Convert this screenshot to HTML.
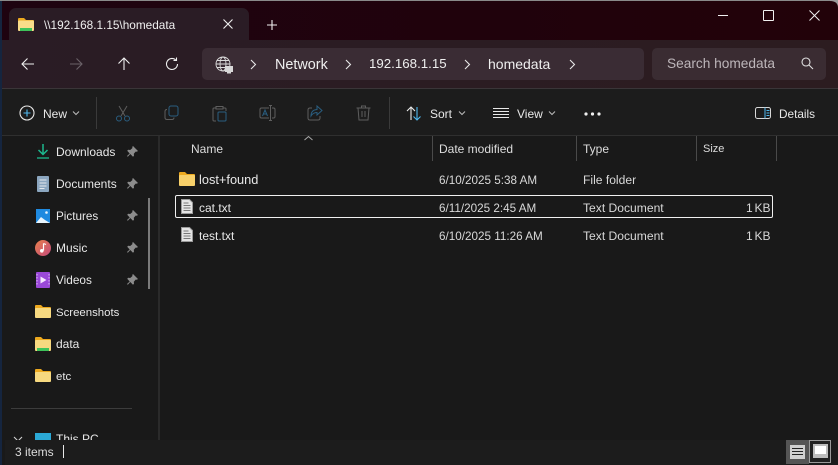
<!DOCTYPE html>
<html><head><meta charset="utf-8">
<style>
html,body{margin:0;padding:0;background:#191919;}
#w{position:relative;width:838px;height:465px;overflow:hidden;background:#191919;font-family:"Liberation Sans",sans-serif;color:#e8e8e8;font-size:12px;}
.t{position:absolute;white-space:nowrap;line-height:16px;}
.b{position:absolute;}
svg{position:absolute;overflow:visible;}
.d{font-size:11.7px;color:#d8d8d8;}
.k{font-size:12.1px;color:#d8d8d8;}
.s{font-size:12px;color:#d8d8d8;word-spacing:-1.5px;left:746px;}
</style></head><body><div id="w">
<div class="b" style="left:0;top:0;width:838px;height:40px;background:linear-gradient(90deg,#1e0310,#220209);"></div>
<div class="b" style="left:0;top:0;width:838px;height:1px;background:#8a8a8a;"></div>
<div class="b" style="left:0;top:1px;width:2px;height:464px;background:#15253f;"></div>
<div class="b" style="left:2px;top:40px;width:836px;height:48px;background:linear-gradient(90deg,#2a1c25,#2c1c20);"></div>
<div class="b" style="left:9px;top:8px;width:240px;height:32px;background:#2a1c25;border-radius:7px 7px 0 0;"></div>
<div class="b" style="left:2px;top:88px;width:836px;height:1px;background:#3a3538;"></div>
<div class="b" style="left:2px;top:89px;width:836px;height:47px;background:#1c1c1c;"></div>
<div class="b" style="left:2px;top:135px;width:836px;height:1px;background:#2f2f2f;"></div>
<svg style="left:830px;top:0" width="8" height="8"><path d="M0 0h8v8q0-7-8-7z" fill="#9a9a9a"/></svg>

<!-- tab -->
<svg style="left:18px;top:17px" width="16" height="15"><path d="M0 2q0-1 1-1h5l2 2h7q1 0 1 1v2H0z" fill="#eda91f"/><rect y="3.500" width="16" height="10.500" rx="1" fill="#f9dd8a"/><rect x="2" y="11" width="12" height="3" fill="#3ec35a"/></svg>
<div class="t" style="left:44px;top:17px;color:#f0f0f0;font-size:11.800px;">\\192.168.1.15\homedata</div>
<svg style="left:222px;top:18px" width="12" height="12" fill="none" stroke="#f0f0f0" stroke-width="1.100"><path d="M1.500 1.500l9 9M10.500 1.500l-9 9"/></svg>
<svg style="left:266px;top:19px" width="12" height="12" fill="none" stroke="#f0f0f0" stroke-width="1.100"><path d="M6 1v10M1 6h10"/></svg>

<!-- window controls -->
<div class="b" style="left:718px;top:15px;width:10px;height:1px;background:#f0f0f0;"></div>
<div class="b" style="left:763px;top:10px;width:9px;height:9px;border:1px solid #f0f0f0;border-radius:1px;"></div>
<svg style="left:809px;top:10px" width="11" height="11" fill="none" stroke="#f0f0f0" stroke-width="1"><path d="M.5.500l10 10M10.500.5l-10 10"/></svg>

<!-- nav -->
<svg style="left:21px;top:57px" width="14" height="14" fill="none" stroke="#efefef" stroke-width="1.100"><path d="M13 7H1M6.500 1.500L1 7l5.500 5.500"/></svg>
<svg style="left:69px;top:57px" width="14" height="14" fill="none" stroke="#6b6268" stroke-width="1.100"><path d="M1 7h12M7.500 1.500L13 7l-5.500 5.500"/></svg>
<svg style="left:117px;top:57px" width="14" height="14" fill="none" stroke="#efefef" stroke-width="1.100"><path d="M7 13V1M1.500 6.500L7 1l5.500 5.500"/></svg>
<svg style="left:165px;top:57px" width="14" height="14" fill="none" stroke="#efefef" stroke-width="1.100"><path d="M12.500 7a5.500 5.500 0 1 1-1.800-4.100M11.500 .5v3h-3"/></svg>

<div class="b" style="left:202px;top:48px;width:442px;height:32px;background:#3a2c34;border-radius:5px;"></div>
<div class="b" style="left:652px;top:48px;width:174px;height:32px;background:#3a2c32;border-radius:5px;"></div>
<svg style="left:215px;top:56px" width="18" height="18" fill="none" stroke="#dcdcdc" stroke-width=".9"><circle cx="8" cy="8" r="7"/><ellipse cx="8" cy="8" rx="3" ry="7"/><path d="M1 8h14M2 4.500h12M2 11.500h12"/><rect x="10" y="10" width="8" height="6" fill="#d8d8d8" stroke="none"/><rect x="12" y="16" width="4" height="1.500" fill="#d8d8d8" stroke="none"/></svg>
<svg style="left:250px;top:59px" width="7" height="11" fill="none" stroke="#e8e8e8" stroke-width="1.100"><path d="M1 1l4.500 4.500L1 10"/></svg>
<div class="t" style="left:275px;top:57px;font-size:14.400px;color:#efefef;">Network</div>
<svg style="left:345px;top:59px" width="7" height="11" fill="none" stroke="#e8e8e8" stroke-width="1.100"><path d="M1 1l4.500 4.500L1 10"/></svg>
<div class="t" style="left:369px;top:56px;font-size:13.300px;color:#efefef;">192.168.1.15</div>
<svg style="left:464px;top:59px" width="7" height="11" fill="none" stroke="#e8e8e8" stroke-width="1.100"><path d="M1 1l4.500 4.500L1 10"/></svg>
<div class="t" style="left:488px;top:56px;font-size:14px;color:#efefef;">homedata</div>
<svg style="left:569px;top:59px" width="7" height="11" fill="none" stroke="#e8e8e8" stroke-width="1.100"><path d="M1 1l4.500 4.500L1 10"/></svg>
<div class="t" style="left:667px;top:56px;font-size:13.700px;color:#bdb6ba;">Search homedata</div>
<svg style="left:801px;top:57px" width="13" height="13" fill="none" stroke="#e0e0e0" stroke-width="1.100"><circle cx="5" cy="5" r="4"/><path d="M8 8l4 4"/></svg>

<!-- toolbar -->
<svg style="left:19px;top:105px" width="16" height="16" fill="none" stroke-width="1.100"><circle cx="8" cy="8" r="7" stroke="#e8e8e8"/><path d="M8 4.500v7M4.500 8h7" stroke="#4fb8ee"/></svg>
<div class="t" style="left:43px;top:106px;">New</div>
<svg style="left:72px;top:111px" width="8" height="5" fill="none" stroke="#bcbcbc"><path d="M1 .5l3 3 3-3"/></svg>
<div class="b" style="left:96px;top:97px;width:1px;height:32px;background:#3a3a3a;"></div>
<svg style="left:115px;top:105px" width="16" height="17" fill="none" stroke-width="1"><path d="M4 1l6 10M12 1L6 11" stroke="#5e5e5e"/><circle cx="4" cy="13.500" r="2.500" stroke="#2a5e80"/><circle cx="12" cy="13.500" r="2.500" stroke="#2a5e80"/></svg>
<svg style="left:164px;top:105px" width="15" height="16" fill="none" stroke-width="1"><rect x="5" y="1" width="9" height="10" rx="2" stroke="#2a5e80"/><path d="M3 4.500q-2 0-2 2v6q0 2 2 2h5q2 0 2-2" stroke="#5e5e5e"/></svg>
<svg style="left:212px;top:105px" width="15" height="17" fill="none" stroke-width="1"><path d="M4 3H2q-1 0-1 1v11q0 1 1 1h2M11 3h2q1 0 1 1v2M4 1.500h7V4H4z" stroke="#5e5e5e"/><rect x="6" y="7" width="8" height="9" rx="1" stroke="#2a5e80"/></svg>
<svg style="left:259px;top:105px" width="17" height="16" fill="none" stroke-width="1"><path d="M10 3H2.500Q1 3 1 4.500v7Q1 13 2.500 13H10M13 3h1.500Q16 3 16 4.500v7q0 1.500-1.500 1.500H13" stroke="#5e5e5e"/><path d="M11.500 .5v15M10 .5h3M10 15.500h3" stroke="#5e5e5e"/><path d="M3.500 11l2.500-6 2.500 6M4.500 9h3" stroke="#2a5e80"/></svg>
<svg style="left:307px;top:105px" width="16" height="16" fill="none" stroke-width="1"><path d="M5 3H3Q1 3 1 5v8q0 2 2 2h8q2 0 2-2v-2" stroke="#5e5e5e"/><path d="M10 1l5 4.500-5 4.500V7.500Q6 7.500 4 11q0-6 6-6.500z" stroke="#2a5e80"/></svg>
<svg style="left:356px;top:105px" width="15" height="16" fill="none" stroke="#5e5e5e" stroke-width="1"><path d="M.5 3h14M5.500 3V1h4v2M2 3l1 12h9l1-12M6 6v6M9 6v6"/></svg>
<div class="b" style="left:389px;top:97px;width:1px;height:32px;background:#3a3a3a;"></div>
<svg style="left:406px;top:106px" width="16" height="15" fill="none" stroke-width="1.100"><path d="M5 14V1M1 5l4-4 4 4" stroke="#ececec"/><path d="M11 1v13M7.500 10.500l3.500 3.500 3.500-3.500" stroke="#4fb8ee"/></svg>
<div class="t" style="left:430px;top:106px;">Sort</div>
<svg style="left:458px;top:111px" width="8" height="5" fill="none" stroke="#bcbcbc"><path d="M1 .5l3 3 3-3"/></svg>
<svg style="left:493px;top:108px" width="16" height="10" fill="none" stroke="#e8e8e8"><path d="M0 .5h16M0 3.500h16M0 6.500h16M0 9.500h16"/></svg>
<div class="t" style="left:517px;top:106px;">View</div>
<svg style="left:548px;top:111px" width="8" height="5" fill="none" stroke="#bcbcbc"><path d="M1 .5l3 3 3-3"/></svg>
<svg style="left:584px;top:112px" width="17" height="4" fill="#f0f0f0"><circle cx="2" cy="2" r="1.600"/><circle cx="8.500" cy="2" r="1.600"/><circle cx="15" cy="2" r="1.600"/></svg>
<svg style="left:755px;top:107px" width="16" height="12" fill="none" stroke-width="1"><rect x=".5" y=".5" width="15" height="11" rx="2" stroke="#d8d8d8"/><path d="M10 .5v11" stroke="#4fb8ee"/><path d="M11.500 3.500h3M11.500 6h3M11.500 8.500h3" stroke="#4fb8ee"/></svg>
<div class="t" style="left:779px;top:106px;font-size:11.800px;">Details</div>

<!-- sidebar -->
<svg style="left:36px;top:144px" width="14" height="16" fill="none" stroke="#1cb78e" stroke-width="1.500"><path d="M7 0v10M2.500 6L7 10.500 11.500 6"/><path d="M1 14h12" stroke-width="1.300"/></svg>
<div class="t" style="left:56px;top:144px;">Downloads</div>
<svg style="left:36px;top:176px" width="14" height="16"><rect x="1" width="12" height="16" rx="1" fill="#8ba6bf"/><path d="M3.500 4h7M3.500 7h7M3.500 10h7M3.500 12.500h5" stroke="#e4e8ec" stroke-width="1"/></svg>
<div class="t" style="left:56px;top:176px;">Documents</div>
<svg style="left:36px;top:209px" width="14" height="14"><rect width="14" height="14" fill="#1f8ae0"/><path d="M0 14l5-6 4 3 5 3z" fill="#e9f4fc"/><circle cx="10.500" cy="3.500" r="1.300" fill="#e9f4fc"/></svg>
<div class="t" style="left:56px;top:209px;font-size:11.700px;">Pictures</div>
<svg style="left:35px;top:240px" width="16" height="16"><defs><linearGradient id="m" x1="0" y1="0" x2="1" y2="1"><stop offset="0" stop-color="#e8804c"/><stop offset="1" stop-color="#c44a7c"/></linearGradient></defs><circle cx="8" cy="8" r="8" fill="url(#m)"/><path d="M8.500 3.500v7" stroke="#fff" stroke-width="1.200"/><circle cx="6.800" cy="10.800" r="1.800" fill="#fff"/><path d="M8.500 3.500l2.500 1" stroke="#fff" stroke-width="1.200"/></svg>
<div class="t" style="left:56px;top:240px;">Music</div>
<svg style="left:36px;top:272px" width="14" height="16"><rect width="14" height="16" rx="1" fill="#9a48d8"/><path d="M4.500 4.500l6 3.500-6 3.500z" fill="#f5e6ff"/><path d="M1 2v12M13 2v12" stroke="#d0a6f0" stroke-width="1.200" stroke-dasharray="1.500 1.500"/></svg>
<div class="t" style="left:56px;top:272px;font-size:11.800px;">Videos</div>
<svg style="left:127px;top:146px" width="11" height="11" fill="#8c8c8c"><path d="M6 0l5 5-1.200.8-1-.3-2 2.200.2 2-1 1L3.300 8 .8 10.700 0 10l2.700-2.500L.2 4.800l1-1 2 .2L5.500 2l-.3-1z"/></svg>
<svg style="left:127px;top:178px" width="11" height="11" fill="#8c8c8c"><path d="M6 0l5 5-1.200.8-1-.3-2 2.200.2 2-1 1L3.300 8 .8 10.700 0 10l2.700-2.500L.2 4.800l1-1 2 .2L5.500 2l-.3-1z"/></svg>
<svg style="left:127px;top:210px" width="11" height="11" fill="#8c8c8c"><path d="M6 0l5 5-1.200.8-1-.3-2 2.200.2 2-1 1L3.300 8 .8 10.700 0 10l2.700-2.500L.2 4.800l1-1 2 .2L5.500 2l-.3-1z"/></svg>
<svg style="left:127px;top:242px" width="11" height="11" fill="#8c8c8c"><path d="M6 0l5 5-1.200.8-1-.3-2 2.200.2 2-1 1L3.300 8 .8 10.700 0 10l2.700-2.500L.2 4.800l1-1 2 .2L5.500 2l-.3-1z"/></svg>
<svg style="left:127px;top:274px" width="11" height="11" fill="#8c8c8c"><path d="M6 0l5 5-1.200.8-1-.3-2 2.200.2 2-1 1L3.300 8 .8 10.700 0 10l2.700-2.500L.2 4.800l1-1 2 .2L5.500 2l-.3-1z"/></svg>
<div class="b" style="left:148px;top:198px;width:2px;height:91px;background:#7a7a7a;"></div>

<svg style="left:35px;top:305px" width="16" height="13"><path d="M0 1q0-1 1-1h5l2 2h7q1 0 1 1v2H0z" fill="#eda91f"/><rect y="3" width="16" height="10" rx="1" fill="#f7d980"/></svg>
<div class="t" style="left:56px;top:305px;font-size:11.400px;">Screenshots</div>
<svg style="left:35px;top:337px" width="16" height="15"><path d="M0 1q0-1 1-1h5l2 2h7q1 0 1 1v2H0z" fill="#eda91f"/><rect y="3" width="16" height="11" rx="1" fill="#f7d980"/><rect x="2" y="11" width="12" height="3" fill="#3ec35a"/></svg>
<div class="t" style="left:56px;top:336px;">data</div>
<svg style="left:35px;top:369px" width="16" height="13"><path d="M0 1q0-1 1-1h5l2 2h7q1 0 1 1v2H0z" fill="#eda91f"/><rect y="3" width="16" height="10" rx="1" fill="#f7d980"/></svg>
<div class="t" style="left:56px;top:369px;font-size:11.400px;">etc</div>
<div class="b" style="left:11px;top:408px;width:121px;height:1px;background:#3c3c3c;"></div>
<svg style="left:13px;top:436px" width="10" height="6" fill="none" stroke="#d0d0d0" stroke-width="1.100"><path d="M1 1l4 4 4-4"/></svg>
<div class="b" style="left:35px;top:433px;width:16px;height:12px;background:#2ba9d6;"></div>
<div class="t" style="left:56px;top:431px;">This PC</div>
<div class="b" style="left:158px;top:136px;width:2px;height:304px;background:#2a2a2a;"></div>

<!-- headers -->
<svg style="left:304px;top:136px" width="9" height="5" fill="none" stroke="#a8a8a8"><path d="M.5 4l4-3.500L8.500 4"/></svg>
<div class="t" style="left:191px;top:141px;color:#dcdcdc;">Name</div>
<div class="t" style="left:439px;top:141px;color:#dcdcdc;">Date modified</div>
<div class="t" style="left:583px;top:141px;color:#dcdcdc;">Type</div>
<div class="t" style="left:703px;top:141px;color:#dcdcdc;font-size:11px;">Size</div>
<div class="b" style="left:432px;top:136px;width:1px;height:25px;background:#4a4a4a;"></div>
<div class="b" style="left:576px;top:136px;width:1px;height:25px;background:#4a4a4a;"></div>
<div class="b" style="left:696px;top:136px;width:1px;height:25px;background:#4a4a4a;"></div>
<div class="b" style="left:776px;top:136px;width:1px;height:25px;background:#4a4a4a;"></div>

<!-- rows -->
<svg style="left:179px;top:172px" width="16" height="14"><path d="M0 1q0-1 1-1h5l2 2h7q1 0 1 1v2H0z" fill="#eda91f"/><rect y="3" width="16" height="11" rx="1" fill="#f7d06a"/></svg>
<div class="t" style="left:199px;top:172px;font-size:12.800px;">lost+found</div>
<div class="t d" style="left:439px;top:173px;">6/10/2025 5:38 AM</div>
<div class="t k" style="left:583px;top:172px;">File folder</div>

<div class="b" style="left:175px;top:195px;width:596px;height:21px;border:1px solid #f0f0f0;border-radius:2px;"></div>
<svg style="left:181px;top:199px" width="12" height="15"><path d="M.5.500h8l3 3v11H.5z" fill="#e4e4e4" stroke="#9a9a9a"/><path d="M2.500 4h5M2.500 6.500h7M2.500 9h7M2.500 11.500h7" stroke="#777"/></svg>
<div class="t" style="left:199px;top:200px;">cat.txt</div>
<div class="t d" style="left:439px;top:201px;">6/11/2025 2:45 AM</div>
<div class="t k" style="left:583px;top:200px;">Text Document</div>
<div class="t s" style="top:200px;">1 KB</div>

<svg style="left:181px;top:227px" width="12" height="15"><path d="M.5.500h8l3 3v11H.5z" fill="#e4e4e4" stroke="#9a9a9a"/><path d="M2.500 4h5M2.500 6.500h7M2.500 9h7M2.500 11.500h7" stroke="#777"/></svg>
<div class="t" style="left:199px;top:228px;">test.txt</div>
<div class="t d" style="left:439px;top:229px;">6/10/2025 11:26 AM</div>
<div class="t k" style="left:583px;top:228px;">Text Document</div>
<div class="t s" style="top:228px;">1 KB</div>

<!-- status -->
<div class="b" style="left:5px;top:440px;width:833px;height:25px;background:#1c1c1c;"></div>
<div class="t" style="left:15px;top:444px;color:#dcdcdc;">3 items</div>
<div class="b" style="left:63px;top:445px;width:1px;height:13px;background:#e8e8e8;"></div>
<div class="b" style="left:786px;top:440px;width:23px;height:24px;background:#555;"></div>
<div class="b" style="left:790px;top:445px;width:15px;height:14px;background:#d0d0d0;"></div>
<svg style="left:790px;top:445px" width="15" height="14" stroke="#222"><path d="M2 3.500h11M2 6.500h11M2 9.500h11"/></svg>
<div class="b" style="left:809px;top:440px;width:22px;height:23px;border:1px solid #9a9a9a;background:#222;box-sizing:border-box;"></div>
<div class="b" style="left:813px;top:444px;width:15px;height:14px;background:#bdbdbd;"></div>
<div class="b" style="left:815px;top:446px;width:11px;height:8px;background:#fff;"></div>
</div></body></html>
